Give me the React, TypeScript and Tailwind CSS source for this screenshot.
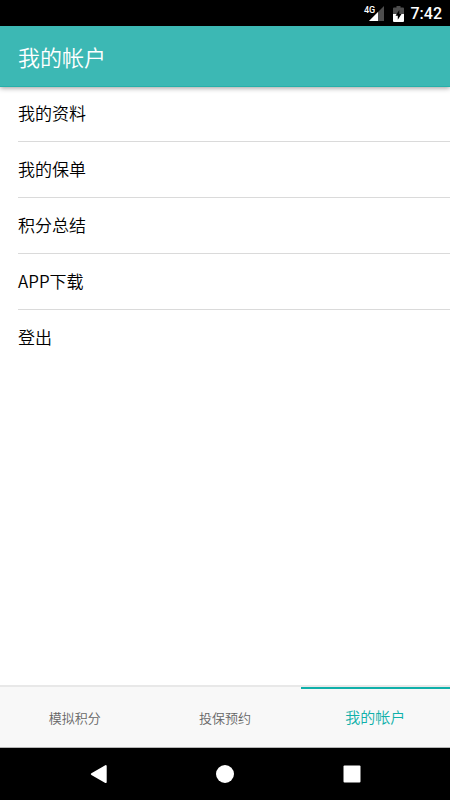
import React, { useState } from 'react';

const menuItems = ['我的资料', '我的保单', '积分总结', 'APP下载', '登出'];

const tabs = [
  { id: 'points', label: '模拟积分' },
  { id: 'booking', label: '投保预约' },
  { id: 'account', label: '我的帐户' },
];

function StatusBar() {
  return (
    <div className="flex h-[26px] shrink-0 items-center justify-end bg-black pt-0.5 pr-2 font-[Roboto,sans-serif] text-white">
      {/* Signal */}
      <svg className="h-[22px] w-5 overflow-visible" viewBox="0 0 20 22" role="img" aria-label="4G">
        <path d="M20 3v15H5z" fill="#4d4d4d" />
        <path d="M14 9v9H5z" fill="#fff" />
        <path d="M0 2h11v8.500H0z" fill="#000" />
        <text x="0" y="10" fill="#fff" fontSize="9" fontWeight="500" fontFamily="Roboto, sans-serif">4G</text>
      </svg>
      {/* Battery */}
      <svg className="ml-[9px] h-4 w-[11px]" viewBox="0 0 11 16" aria-hidden="true">
        <path d="M3.500 0h4v1.500H10a1 1 0 0 1 1 1V8H0V2.500a1 1 0 0 1 1-1h2.500z" fill="#4d4d4d" />
        <path d="M0 8h11v7a1 1 0 0 1-1 1H1a1 1 0 0 1-1-1z" fill="#fff" />
        <path d="M6.300 4 2.500 9.700h2.300v4L8.500 8H6.300z" fill="#000" />
      </svg>
      <span className="ml-[7px] text-base font-medium">7:42</span>
    </div>
  );
}

function SystemNav() {
  return (
    <div className="flex h-[52px] shrink-0 items-center justify-center gap-[109px] bg-black text-white">
      <button type="button" aria-label="Back">
        <svg className="h-5 w-[18px]" viewBox="0 0 18 20" fill="currentColor">
          <path d="M16.300 1.200 2.400 9.200a1 1 0 0 0 0 1.700l13.900 8a.9.9 0 0 0 1.400-.8V2a.9.9 0 0 0-1.400-.8z" />
        </svg>
      </button>
      <button type="button" aria-label="Home">
        <svg className="h-[18px] w-[18px]" viewBox="0 0 18 18" fill="currentColor">
          <circle cx="9" cy="9" r="9" />
        </svg>
      </button>
      <button type="button" aria-label="Recent apps">
        <svg className="h-[18px] w-[18px]" viewBox="0 0 18 18" fill="currentColor">
          <rect x="0.500" y="0.500" width="17" height="17" rx="1" />
        </svg>
      </button>
    </div>
  );
}

export default function App() {
  const [activeTab, setActiveTab] = useState('account');

  return (
    <div className="flex min-h-screen flex-col bg-white font-['Noto_Sans_CJK_SC_DemiLight','Noto_Sans_CJK_SC',sans-serif]">
      <StatusBar />

      {/* Header */}
      <header className="z-10 flex h-[61px] shrink-0 items-center border-b border-[#26b0aa] bg-[#3cb8b4] px-[18px] shadow-[0_1px_5px_rgba(0,0,0,0.4)]">
        <h1 className="text-[22px] font-light text-white">我的帐户</h1>
      </header>

      {/* Menu */}
      <main className="-mt-px flex-1">
        <ul className="divide-y divide-[#dadada] pl-[18px]">
          {menuItems.map((item) => (
            <li key={item} className="h-14">
              <button type="button" className="h-full w-full pb-0.5 text-left text-[17px] font-light text-black">
                {item}
              </button>
            </li>
          ))}
        </ul>
      </main>

      {/* Tabs */}
      <nav className="grid h-[63px] shrink-0 grid-cols-3 gap-px border-t-2 border-b border-t-[#e8e8e8] border-b-[#b5b5b5] bg-[#f8f8f8]">
        {tabs.map((tab) => (
          <button
            key={tab.id}
            type="button"
            onClick={() => setActiveTab(tab.id)}
            className={
              activeTab === tab.id
                ? 'border-t-2 border-[#0fb0aa] pb-0.5 text-[15px] font-light text-[#0fb0aa]'
                : 'border-t-2 border-transparent text-[13px] font-light text-[#666]'
            }
          >
            {tab.label}
          </button>
        ))}
      </nav>

      <SystemNav />
    </div>
  );
}
